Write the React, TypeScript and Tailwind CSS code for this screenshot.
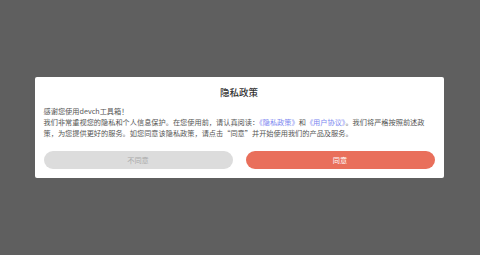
import React from 'react';

export default function App() {
  return (
    <div
      className="h-[255px] w-full bg-[#5f5f5f] flex items-center justify-center"
      style={{ fontFamily: '"Noto Sans CJK SC", "Noto Sans", sans-serif' }}
    >
      <div className="w-[409px] bg-white rounded-[2px] px-[9px] pt-[9px] pb-[9px] -translate-x-[1px]">
        <h1 className="text-center text-[9.5px] leading-[12px] font-medium text-[#333]">隐私政策</h1>

        {/* Body */}
        <div className="mt-[8px] text-[7.2px] leading-[11px] text-[#555]">
          <p>感谢您使用devch工具箱！</p>
          <p>
            我们非常重视您的隐私和个人信息保护。在您使用前，请认真阅读：
            <span className="text-[#7b86f0]">《隐私政策》</span>和
            <span className="text-[#7b86f0]">《用户协议》</span>
            。我们将严格按照前述政策，为您提供更好的服务。如您同意该隐私政策，请点击“同意”并开始使用我们的产品及服务。
          </p>
        </div>

        {/* Actions */}
        <div className="mt-[12px] flex gap-[13px]">
          <button className="flex-1 h-[18px] rounded-full bg-[#dcdcdc] text-[7.2px] text-[#aaa]">不同意</button>
          <button className="flex-1 h-[18px] rounded-full bg-[#e96f5b] text-[7.2px] text-white">同意</button>
        </div>
      </div>
    </div>
  );
}
